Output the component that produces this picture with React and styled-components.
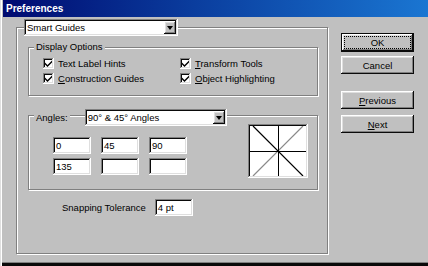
import styled, { createGlobalStyle } from 'styled-components';

const GlobalStyle = createGlobalStyle`
  html, body {
    margin: 0;
    padding: 0;
    background: #c0c0c0;
  }
  body {
    font-family: 'Liberation Sans', Arial, sans-serif;
    font-size: 9.5px;
    color: #000;
  }
`;

const raised = `
  box-shadow: inset -1px -1px #0a0a0a, inset 1px 1px #fff,
    inset -2px -2px #808080, inset 2px 2px #dfdfdf;
`;

const sunken = `
  box-shadow: inset -1px -1px #fff, inset 1px 1px #808080,
    inset -2px -2px #dfdfdf, inset 2px 2px #0a0a0a;
`;

const ANGLES = ['0', '45', '90', '135', '', ''];

const App = () => {
  return (
    <>
      <GlobalStyle />
      <Window>
        <TitleBar>Preferences</TitleBar>
        <Body>
          <Group $height={227}>
            <GroupHeader $lift={-9} $indent={7}>
              <Combo $width={154}>
                <ComboText>Smart Guides</ComboText>
                <ComboButton>
                  <Arrow />
                </ComboButton>
              </Combo>
            </GroupHeader>
            <OuterBody>
              <Group>
                <GroupHeader $lift={-7} $indent={5}>
                  <Legend>Display Options</Legend>
                </GroupHeader>
                <CheckGrid>
                  <Check label="Text Label Hints" />
                  <Check label="Transform Tools" mnemonic />
                  <Check label="Construction Guides" mnemonic />
                  <Check label="Object Highlighting" mnemonic />
                </CheckGrid>
              </Group>

              <Group $gap={19}>
                <GroupHeader $lift={-7} $indent={5}>
                  <Legend>Angles:</Legend>
                  <Combo $width={142} $gap={15}>
                    <ComboText>90° &amp; 45° Angles</ComboText>
                    <ComboButton>
                      <Arrow />
                    </ComboButton>
                  </Combo>
                </GroupHeader>
                <AngleBody>
                  <AngleGrid>
                    {ANGLES.map((value, i) => (
                      <Field key={i} $width={38}>
                        {value}
                      </Field>
                    ))}
                  </AngleGrid>
                  <Preview>
                    <svg width="56" height="50" viewBox="0 0 56 50">
                      <line x1="53" y1="0" x2="3" y2="50" stroke="#8a8a8a" strokeWidth="1.2" />
                      <line x1="3" y1="0" x2="53" y2="50" stroke="#000" strokeWidth="1.2" />
                      <line x1="28.5" y1="0" x2="28.5" y2="50" stroke="#000" strokeWidth="1" />
                      <line x1="0" y1="25.5" x2="56" y2="25.5" stroke="#000" strokeWidth="1" />
                    </svg>
                  </Preview>
                </AngleBody>
              </Group>

              <SnapRow>
                <span>Snapping Tolerance</span>
                <Field $width={38}>4 pt</Field>
              </SnapRow>
            </OuterBody>
          </Group>

          <ButtonColumn>
            <Button $default $gap={6}>
              <FocusRing>OK</FocusRing>
            </Button>
            <Button $gap={4}>Cancel</Button>
            <Button $gap={17}>
              <u>P</u>revious
            </Button>
            <Button $gap={6}>
              <u>N</u>ext
            </Button>
          </ButtonColumn>
        </Body>
      </Window>
    </>
  );
};

const Check = ({ label, mnemonic }) => (
  <CheckItem>
    <CheckBox>
      <svg width="7" height="7" viewBox="0 0 7 7">
        <path d="M0 2.5 L2.5 5 L7 0.5 L7 2.5 L2.5 7 L0 4.5 Z" fill="#000" />
      </svg>
    </CheckBox>
    {mnemonic ? (
      <span>
        <u>{label[0]}</u>
        {label.slice(1)}
      </span>
    ) : (
      <span>{label}</span>
    )}
  </CheckItem>
);

export default App;

const Window = styled.div`
  width: 428px;
  height: 266px;
  box-sizing: border-box;
  padding-left: 3px;
  background: #c0c0c0;
  box-shadow: inset 1px 0 #dfdfdf, inset 2px 0 #fff, inset 0 -3px #0a0a0a,
    inset 0 -4px #808080;
  display: flex;
  flex-direction: column;
  overflow: hidden;
`;

const TitleBar = styled.div`
  height: 17px;
  flex: none;
  display: flex;
  align-items: center;
  padding-left: 3px;
  background: linear-gradient(90deg, #000a70 0%, #0a3d9e 45%, #1a76d2 100%);
  color: #fff;
  font-weight: bold;
  font-size: 10px;
`;

const Body = styled.div`
  display: flex;
  align-items: flex-start;
  padding: 10px 0 0 13px;
`;

const Group = styled.div`
  box-sizing: border-box;
  width: ${(p) => (p.$height ? '312px' : 'auto')};
  height: ${(p) => (p.$height ? `${p.$height}px` : 'auto')};
  margin-top: ${(p) => p.$gap || 0}px;
  border: 1px solid #808080;
  box-shadow: 1px 1px 0 #fff, inset 1px 1px 0 #fff;
  flex: none;
`;

const GroupHeader = styled.div`
  display: flex;
  align-items: center;
  margin-top: ${(p) => p.$lift}px;
  padding-left: ${(p) => p.$indent}px;
`;

const Legend = styled.span`
  background: #c0c0c0;
  padding: 0 2px;
  line-height: 12px;
`;

const Combo = styled.div`
  box-sizing: border-box;
  width: ${(p) => p.$width}px;
  height: 17px;
  margin-left: ${(p) => p.$gap || 0}px;
  padding: 2px;
  background: #fff;
  ${sunken}
  display: flex;
  align-items: center;
`;

const ComboText = styled.span`
  flex: 1;
  padding-left: 1px;
  white-space: nowrap;
`;

const ComboButton = styled.div`
  width: 12px;
  height: 13px;
  background: #c0c0c0;
  ${raised}
  display: flex;
  align-items: center;
  justify-content: center;
`;

const Arrow = styled.span`
  width: 0;
  height: 0;
  border-left: 3.5px solid transparent;
  border-right: 3.5px solid transparent;
  border-top: 4px solid #000;
  margin-top: 1px;
`;

const OuterBody = styled.div`
  padding: 11px 9px 0 11px;
`;

const CheckGrid = styled.div`
  display: grid;
  grid-template-columns: 137px auto;
  grid-auto-rows: 15px;
  padding: 3px 0 9px 14px;
`;

const CheckItem = styled.label`
  display: flex;
  align-items: center;
  gap: 4px;
  white-space: nowrap;
`;

const CheckBox = styled.span`
  box-sizing: border-box;
  width: 11px;
  height: 11px;
  background: #fff;
  ${sunken}
  display: flex;
  align-items: center;
  justify-content: center;
`;

const AngleBody = styled.div`
  display: flex;
  align-items: flex-start;
  padding: 0 9px 11px 24px;
`;

const AngleGrid = styled.div`
  display: grid;
  grid-template-columns: repeat(3, 38px);
  column-gap: 10px;
  row-gap: 4px;
  margin-top: 11px;
`;

const Field = styled.div`
  box-sizing: border-box;
  width: ${(p) => p.$width}px;
  height: 17px;
  padding-left: 3px;
  line-height: 17px;
  background: #fff;
  ${sunken}
  white-space: nowrap;
`;

const Preview = styled.div`
  box-sizing: border-box;
  width: 60px;
  height: 54px;
  margin-left: auto;
  margin-top: -2px;
  padding: 2px;
  background: #fff;
  ${sunken}

  svg {
    display: block;
  }
`;

const SnapRow = styled.div`
  display: flex;
  align-items: center;
  gap: 9px;
  margin-top: 9px;
  padding-left: 34px;
`;

const ButtonColumn = styled.div`
  display: flex;
  flex-direction: column;
  margin-left: 13px;
`;

const Button = styled.div`
  box-sizing: border-box;
  width: 73px;
  height: ${(p) => (p.$default ? 19 : 18)}px;
  margin-top: ${(p) => p.$gap}px;
  display: flex;
  align-items: center;
  justify-content: center;
  background: #c0c0c0;
  ${(p) =>
    p.$default
      ? `box-shadow: inset 0 0 0 1px #0a0a0a, inset -2px -2px #0a0a0a, inset 2px 2px #fff,
    inset -3px -3px #808080, inset 3px 3px #dfdfdf;`
      : raised}
  padding: 3px;
`;

const FocusRing = styled.span`
  box-sizing: border-box;
  width: 100%;
  height: 100%;
  display: flex;
  align-items: center;
  justify-content: center;
  outline: 1px dotted #000;
  outline-offset: -1px;
`;
